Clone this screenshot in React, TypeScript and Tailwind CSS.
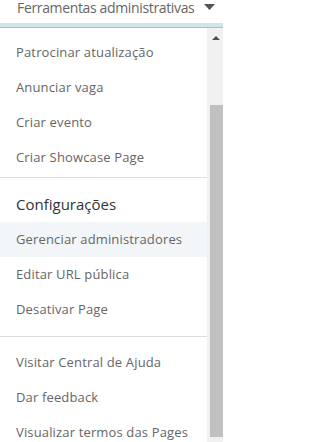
import { clsx } from 'clsx';

type MenuItem = { label: string; active?: boolean };

const adminItems: MenuItem[] = [
  { label: 'Patrocinar atualização' },
  { label: 'Anunciar vaga' },
  { label: 'Criar evento' },
  { label: 'Criar Showcase Page' },
];

const settingsItems: MenuItem[] = [
  { label: 'Gerenciar administradores', active: true },
  { label: 'Editar URL pública' },
  { label: 'Desativar Page' },
];

const helpItems: MenuItem[] = [
  { label: 'Visitar Central de Ajuda' },
  { label: 'Dar feedback' },
  { label: 'Visualizar termos das Pages' },
];

const Row = ({ item }: { item: MenuItem }) => (
  <div
    className={clsx(
      'h-[35px] flex items-center pl-4 text-[13px] tracking-[0.15px] text-[#666666] whitespace-nowrap',
      item.active && 'bg-[#f3f6f8]'
    )}
  >
    {item.label}
  </div>
);

const App = () => {
  return (
    <div className="w-[223px] h-[442px] overflow-hidden bg-white font-['Open_Sans',sans-serif]">
      {/* trigger */}
      <div className="h-[23px] flex items-end pl-[17px] pr-[8px] overflow-hidden">
        <span className="text-[14px] leading-[20px] tracking-[-0.35px] text-[#666666] whitespace-nowrap mb-[5px]">
          Ferramentas administrativas
        </span>
        <svg width="11" height="6" viewBox="0 0 11 6" className="ml-auto mb-[13px] shrink-0">
          <path d="M0 0h11L5.5 6z" fill="#555555" />
        </svg>
      </div>
      <div className="h-[4px] bg-[#cfe7ea]" />
      <div className="h-px bg-[#9cc6cb]" />

      {/* dropdown */}
      <div className="flex h-[414px]">
        <div className="flex-1 pt-[7px]">
          {adminItems.map((i) => (
            <Row key={i.label} item={i} />
          ))}
          <div className="mt-[2px] border-t border-[#dddddd]" />
          <div className="h-[44px] pt-2 pl-4 flex items-center text-[15px] text-[#333333]">
            Configurações
          </div>
          {settingsItems.map((i) => (
            <Row key={i.label} item={i} />
          ))}
          <div className="mt-[9px] border-t border-[#dddddd]" />
          <div className="pt-[8px]">
            {helpItems.map((i) => (
              <Row key={i.label} item={i} />
            ))}
          </div>
        </div>

        {/* scrollbar */}
        <div className="w-4 bg-[#f1f1f1] flex flex-col items-center">
          <svg width="8" height="4" viewBox="0 0 8 4" className="mt-[8px] ml-[1px]">
            <path d="M0 4h8L4 0z" fill="#505050" />
          </svg>
          <div className="mt-[65px] w-[13px] ml-[3px] h-[332px] bg-[#c1c1c1]" />
        </div>
      </div>
    </div>
  );
};

export default App;
